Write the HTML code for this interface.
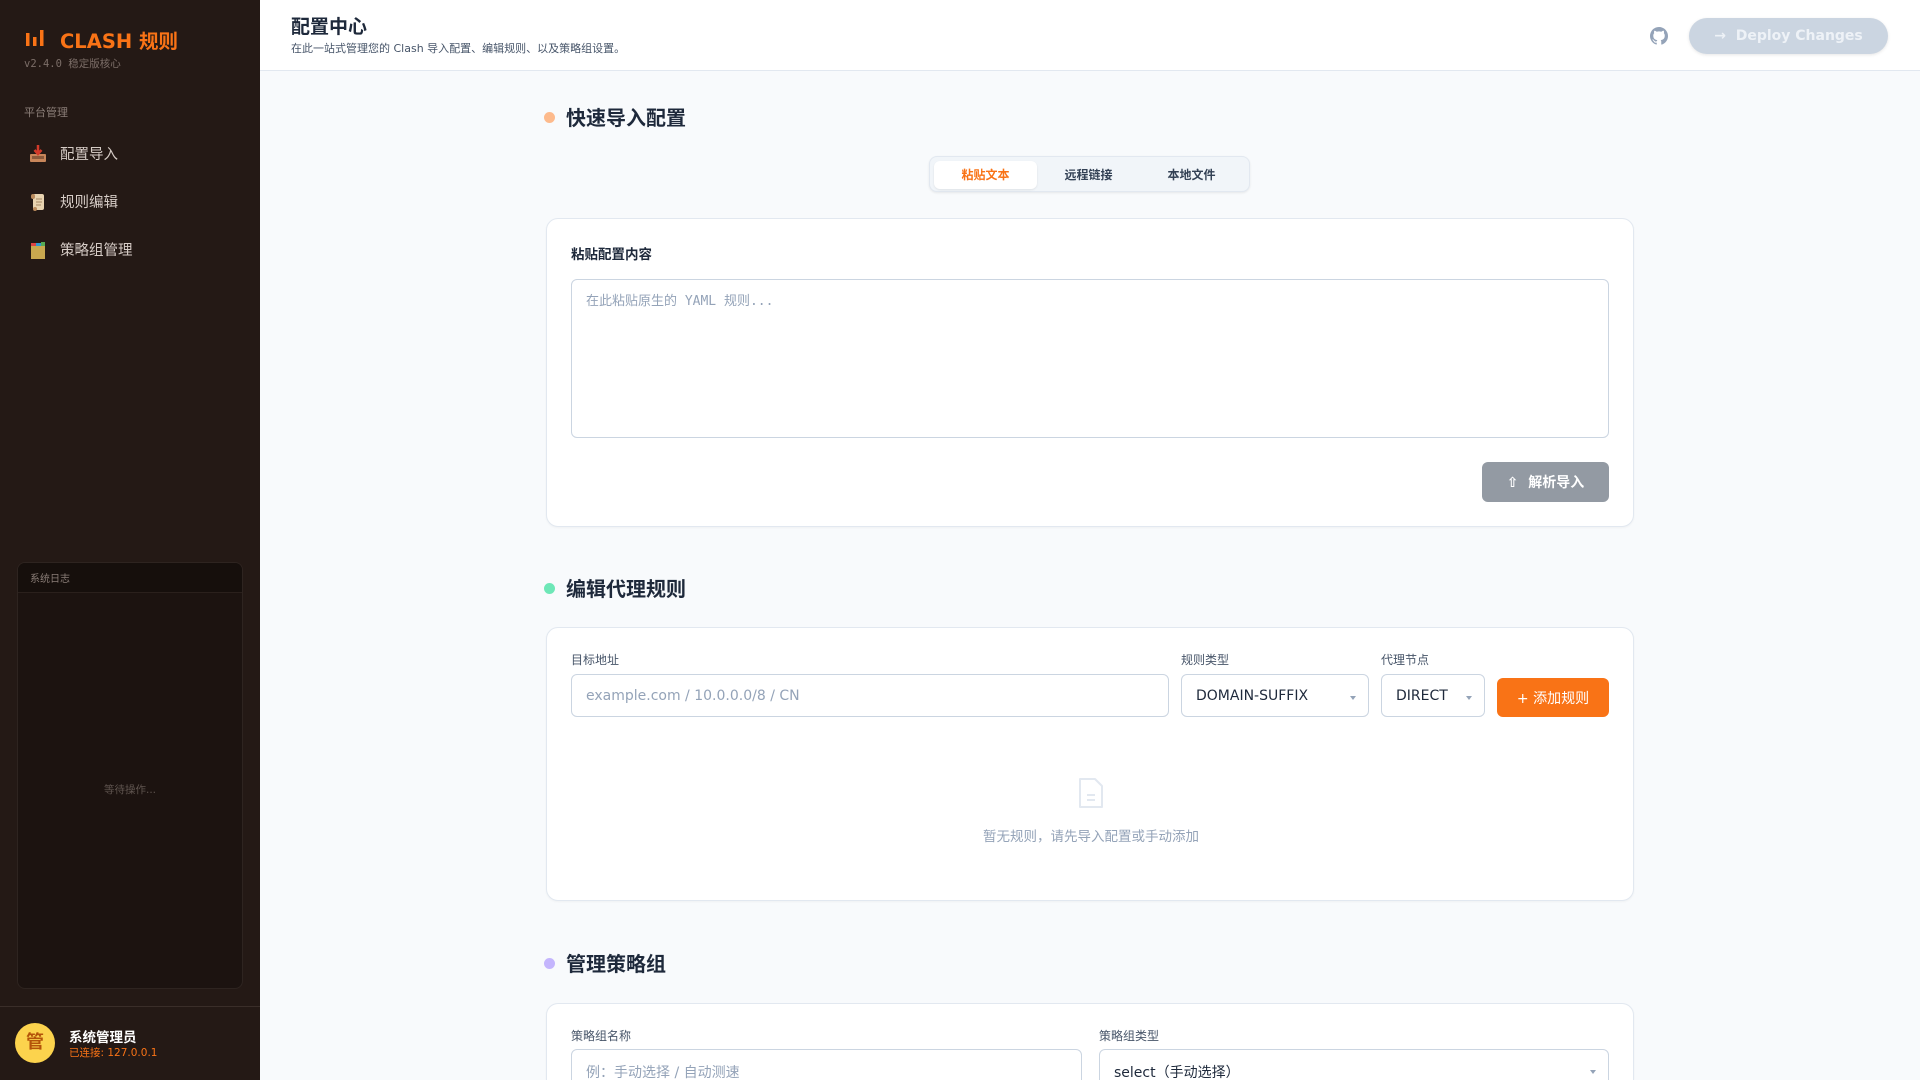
<!DOCTYPE html>
<html style="overflow:hidden;width:1920px;height:1080px"><head><meta charset="utf-8"><style>
*{box-sizing:border-box;margin:0;padding:0}
body{width:1920px;height:1080px;overflow:hidden;background:#f8fafc;font-family:"DejaVu Sans","Noto Sans CJK SC",sans-serif;color:#1e293b;position:relative}
.sb{position:absolute;left:0;top:0;width:260px;height:1080px;background:#241915}
.abs{position:absolute}
.nav{position:absolute;left:28px;font-size:14.5px;color:#d6ccc6;display:flex;align-items:center}
.nav svg{margin-right:12px}
.hdr{position:absolute;left:260px;top:0;width:1660px;height:71px;background:#fff;border-bottom:1px solid #e2e8f0}
.sec{position:absolute;left:566px;font-size:20px;font-weight:bold;color:#1e293b}
.dot{position:absolute;left:544px;width:11px;height:11px;border-radius:50%}
.card{position:absolute;left:546px;width:1088px;background:#fff;border:1px solid #e2e8f0;border-radius:12px;box-shadow:0 1px 2px rgba(0,0,0,.04)}
.lbl{position:absolute;font-size:12px;color:#475569}
.inp{position:absolute;border:1px solid #cbd5e1;border-radius:6px;background:#fff;font-size:14px;display:flex;align-items:center;padding-left:14px}
.caret{position:absolute;right:12px;top:50%;width:0;height:0;border-left:3px solid transparent;border-right:3px solid transparent;border-top:4px solid #94a3b8}
</style></head><body>
<div class="sb">
  <svg class="abs" style="left:25px;top:28px" width="20" height="20" viewBox="0 0 20 20"><rect x="1" y="5" width="3.5" height="13" fill="#f97316"/><rect x="8" y="9" width="3.5" height="9" fill="#f97316"/><rect x="15" y="2" width="3.5" height="16" fill="#f97316"/></svg>
  <div class="abs" style="left:60px;top:25px;font-size:19.5px;font-weight:bold;color:#f97316">CLASH 规则</div>
  <div class="abs" style="left:24px;top:56px;font-size:10.5px;color:#7c6e68;font-family:'DejaVu Sans Mono','Noto Sans CJK SC',monospace">v2.4.0 稳定版核心</div>
  <div class="abs" style="left:24px;top:104px;font-size:11px;color:#8a7d77">平台管理</div>
  <div class="nav" style="top:143px"><svg width="20" height="20" viewBox="0 0 20 20"><rect x="2" y="10" width="16" height="8" rx="1" fill="#c8865a"/><rect x="4" y="12" width="12" height="3" fill="#8b5a3c"/><path d="M10 1v8M6.5 6l3.5 4 3.5-4" stroke="#d23a2a" stroke-width="2.5" fill="none"/></svg>配置导入</div>
  <div class="nav" style="top:191px"><svg width="20" height="20" viewBox="0 0 20 20"><rect x="5" y="2" width="11" height="16" rx="2" fill="#e8d3b0"/><rect x="3" y="2" width="4" height="5" rx="2" fill="#b98a5c"/><rect x="5" y="15" width="4" height="4" rx="2" fill="#b98a5c"/><path d="M8 7h6M8 10h6M8 13h5" stroke="#a48763" stroke-width="1"/></svg>规则编辑</div>
  <div class="nav" style="top:239px"><svg width="20" height="20" viewBox="0 0 20 20"><rect x="3" y="5" width="14" height="14" fill="#c9a84f"/><rect x="3" y="3" width="5" height="3" fill="#d44"/><rect x="8" y="3" width="5" height="3" fill="#39c"/><rect x="13" y="2" width="4" height="4" fill="#5a5"/></svg>策略组管理</div>
  <div class="abs" style="left:17px;top:562px;width:226px;height:427px;background:#1c1310;border:1px solid #2e2420;border-radius:8px;overflow:hidden">
    <div style="height:30px;background:#160f0c;border-bottom:1px solid #2a201c;font-size:10px;color:#8a7d77;padding:7px 12px">系统日志</div>
    <div style="position:absolute;top:219px;width:100%;text-align:center;font-size:10.5px;color:#5f544f">等待操作...</div>
  </div>
  <div class="abs" style="left:0;top:1006px;width:260px;height:1px;background:#3a2e29"></div>
  <div class="abs" style="left:15px;top:1023px;width:40px;height:40px;border-radius:50%;background:#fcd34d;color:#b45309;font-weight:bold;font-size:18px;text-align:center;line-height:40px">管</div>
  <div class="abs" style="left:69px;top:1026px;font-size:13.5px;font-weight:bold;color:#fff">系统管理员</div>
  <div class="abs" style="left:69px;top:1045px;font-size:10.5px;color:#f97316">已连接: 127.0.0.1</div>
</div>
<div class="hdr">
  <div class="abs" style="left:31px;top:12px;font-size:19px;font-weight:bold;color:#1e293b">配置中心</div>
  <div class="abs" style="left:31px;top:40px;font-size:11px;color:#475569">在此一站式管理您的 Clash 导入配置、编辑规则、以及策略组设置。</div>
  <svg class="abs" style="left:1390px;top:27px" width="18" height="18" viewBox="0 0 16 16"><path fill="#94a3b8" d="M8 0C3.58 0 0 3.58 0 8c0 3.54 2.290 6.53 5.47 7.59.4.07.55-.17.55-.38v-1.33c-2.23.48-2.7-1.07-2.7-1.07-.36-.92-.89-1.17-.89-1.170-.73-.5.06-.49.06-.49.8.06 1.23.83 1.23.83.71 1.23 1.87.87 2.33.66.07-.52.28-.87.51-1.07-1.78-.2-3.64-.89-3.64-3.95 0-.87.31-1.59.82-2.15-.08-.2-.36-1.02.08-2.12 0 0 .67-.21 2.2.82a7.6 7.6 0 0 1 4 0c1.53-1.04 2.2-.82 2.2-.82.44 1.1.16 1.92.08 2.12.51.56.82 1.27.82 2.15 0 3.07-1.87 3.75-3.65 3.95.29.25.54.73.54 1.48v2.2c0 .21.15.46.55.38A8 8 0 0 0 16 8c0-4.42-3.58-8-8-8z"/></svg>
  <div class="abs" style="left:1429px;top:18px;width:199px;height:36px;border-radius:18px;background:#cbd5e1;color:#eef2f7;font-weight:bold;font-size:14px;display:flex;align-items:center;justify-content:center;box-shadow:0 1px 3px rgba(0,0,0,.1)">→&nbsp;&nbsp;Deploy Changes</div>
</div>

<div class="dot" style="top:112px;background:#fdba8c"></div>
<div class="sec" style="top:102px">快速导入配置</div>
<div class="abs" style="left:929px;top:156px;width:321px;height:36px;background:#f1f5f9;border:1px solid #e2e8f0;border-radius:8px;box-shadow:0 1px 2px rgba(0,0,0,.08)">
  <div class="abs" style="left:4px;top:4px;width:103px;height:28px;background:#fff;border-radius:6px;box-shadow:0 1px 2px rgba(0,0,0,.08)"></div>
  <div class="abs" style="left:4px;top:9px;width:103px;text-align:center;font-size:12px;font-weight:bold;color:#f97316">粘贴文本</div>
  <div class="abs" style="left:107px;top:9px;width:103px;text-align:center;font-size:12px;font-weight:bold;color:#334155">远程链接</div>
  <div class="abs" style="left:210px;top:9px;width:103px;text-align:center;font-size:12px;font-weight:bold;color:#334155">本地文件</div>
</div>
<div class="card" style="top:218px;height:309px">
  <div class="lbl" style="left:24px;top:24px;font-size:13.5px;font-weight:bold;color:#1e293b">粘贴配置内容</div>
  <div class="abs" style="left:24px;top:60px;width:1038px;height:159px;border:1px solid #cbd5e1;border-radius:6px;padding:10px 14px;font-size:13px;color:#94a3b8;font-family:'DejaVu Sans Mono','Noto Sans CJK SC',monospace">在此粘贴原生的 YAML 规则...</div>
  <div class="abs" style="left:935px;top:243px;width:127px;height:40px;border-radius:6px;background:#939aa3;color:#fff;font-size:14px;font-weight:bold;display:flex;align-items:center;justify-content:center">⇧&nbsp;&nbsp;解析导入</div>
</div>

<div class="dot" style="top:583px;background:#6ee7b7"></div>
<div class="sec" style="top:573px">编辑代理规则</div>
<div class="card" style="top:627px;height:274px">
  <div class="lbl" style="left:24px;top:23px">目标地址</div>
  <div class="lbl" style="left:634px;top:23px">规则类型</div>
  <div class="lbl" style="left:834px;top:23px">代理节点</div>
  <div class="inp" style="left:24px;top:46px;width:598px;height:43px;color:#94a3b8">example.com / 10.0.0.0/8 / CN</div>
  <div class="inp" style="left:634px;top:46px;width:188px;height:43px;color:#1e293b">DOMAIN-SUFFIX<span class="caret"></span></div>
  <div class="inp" style="left:834px;top:46px;width:104px;height:43px;color:#1e293b">DIRECT<span class="caret"></span></div>
  <div class="abs" style="left:950px;top:50px;width:112px;height:39px;border-radius:6px;background:#f97316;color:#fff;font-size:14px;display:flex;align-items:center;justify-content:center">+ 添加规则</div>
  <svg class="abs" style="left:531px;top:149px" width="26" height="32" viewBox="0 0 26 32"><path d="M2 2h15l7 7v21H2z" fill="none" stroke="#e2e8f0" stroke-width="2" stroke-linejoin="round"/><path d="M9 18h8M9 23h8" stroke="#e2e8f0" stroke-width="2"/></svg>
  <div class="abs" style="left:0;top:197px;width:1088px;text-align:center;font-size:13.5px;color:#94a3b8">暂无规则，请先导入配置或手动添加</div>
</div>

<div class="dot" style="top:958px;background:#c4b5fd"></div>
<div class="sec" style="top:948px">管理策略组</div>
<div class="card" style="top:1003px;height:77px;border-bottom:none;border-radius:12px 12px 0 0">
  <div class="lbl" style="left:24px;top:23px">策略组名称</div>
  <div class="lbl" style="left:552px;top:23px">策略组类型</div>
  <div class="inp" style="left:24px;top:45px;width:511px;height:43px;color:#94a3b8;align-items:flex-start;padding-top:12px">例：手动选择 / 自动测速</div>
  <div class="inp" style="left:552px;top:45px;width:510px;height:43px;color:#1e293b;align-items:flex-start;padding-top:12px">select（手动选择）<span class="caret" style="top:20px"></span></div>
</div>
</body></html>
